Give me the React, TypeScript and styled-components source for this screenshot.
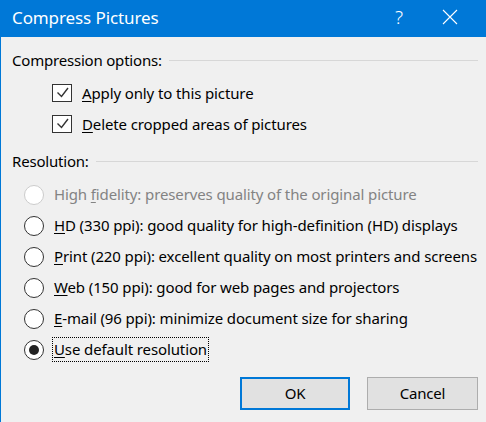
import styled, { createGlobalStyle } from 'styled-components';

const GlobalStyle = createGlobalStyle`
  html, body {
    margin: 0;
    padding: 0;
    background: #f0f0f0;
  }
  body {
    font-family: "Noto Sans", "Open Sans", sans-serif;
  }
`;

const Window = styled.div`
  width: 486px;
  height: 422px;
  box-sizing: border-box;
  border-left: 1px solid #0078d7;
  background: #f0f0f0;
  display: flex;
  flex-direction: column;
  overflow: hidden;
`;

const TitleBar = styled.div`
  height: 37px;
  flex: none;
  background: #0078d7;
  color: #fff;
  display: flex;
  align-items: center;
  padding: 0 0 3px 11px;
  box-sizing: border-box;
`;

const TitleText = styled.div`
  flex: 1;
  font-size: 17px;
  letter-spacing: -0.1px;
`;

const TitleButton = styled.div<{ $width: number }>`
  width: ${(p) => p.$width}px;
  display: flex;
  justify-content: center;
  align-items: center;
  font-size: 19px;
  font-weight: 300;
`;

const Body = styled.div`
  flex: 1;
  display: flex;
  flex-direction: column;
  padding: 11px 8px 0 11px;
`;

const GroupHeader = styled.div<{ $top?: number }>`
  height: 24px;
  margin-top: ${(p) => p.$top ?? 0}px;
  display: flex;
  align-items: center;
  font-size: 15px;
  letter-spacing: -0.2px;
  color: #000;
  &::after {
    content: '';
    flex: 1;
    height: 1px;
    background: #d7d7d7;
    margin-left: 7px;
    margin-top: 1px;
  }
`;

const OptionList = styled.div<{ $indent: number; $top: number }>`
  display: flex;
  flex-direction: column;
  padding-left: ${(p) => p.$indent}px;
  margin-top: ${(p) => p.$top}px;
`;

const OptionRow = styled.div<{ $disabled?: boolean }>`
  height: 31px;
  display: flex;
  align-items: center;
  gap: 10px;
  font-size: 15px;
  letter-spacing: -0.12px;
  white-space: nowrap;
  color: ${(p) => (p.$disabled ? '#838383' : '#000')};
`;

const CheckBox = styled.div`
  width: 20px;
  height: 18px;
  box-sizing: border-box;
  border: 1px solid #333;
  background: #fff;
  flex: none;
  display: flex;
`;

const Radio = styled.div<{ $disabled?: boolean; $checked?: boolean }>`
  width: 20px;
  height: 20px;
  box-sizing: border-box;
  border-radius: 50%;
  border: 1px solid ${(p) => (p.$disabled ? '#cccccc' : '#333')};
  background: #fff;
  flex: none;
  display: flex;
  align-items: center;
  justify-content: center;
  &::after {
    content: '';
    display: ${(p) => (p.$checked ? 'block' : 'none')};
    width: 10px;
    height: 10px;
    border-radius: 50%;
    background: #222;
  }
`;

const Label = styled.span<{ $focused?: boolean }>`
  padding: 2px 2px 3px;
  margin-left: -2px;
  outline: ${(p) => (p.$focused ? '1px dotted #000' : 'none')};
  outline-offset: -1px;
`;

const Key = styled.span`
  text-decoration: underline;
  text-underline-offset: 2px;
`;

const ButtonRow = styled.div`
  display: flex;
  justify-content: flex-end;
  gap: 17px;
  margin-top: 12px;
`;

const Button = styled.button<{ $primary?: boolean }>`
  width: ${(p) => (p.$primary ? 110 : 111)}px;
  height: 33px;
  box-sizing: border-box;
  background: #e1e1e1;
  border: ${(p) => (p.$primary ? '2px solid #0078d7' : '1px solid #adadad')};
  font-family: "Noto Sans", "Open Sans", sans-serif;
  font-size: 15px;
  letter-spacing: -0.2px;
  color: #000;
  padding: 0 0 2px;
`;

const Check = () => (
  <svg width="18" height="16" viewBox="0 0 18 16">
    <path d="M4.5 7.5 L8.5 11.5 L15 3" fill="none" stroke="#333" strokeWidth="1.4" />
  </svg>
);

const radios = [
  { key: 'f', before: 'High ', after: 'idelity: preserves quality of the original picture', disabled: true },
  { key: 'H', before: '', after: 'D (330 ppi): good quality for high-definition (HD) displays' },
  { key: 'P', before: '', after: 'rint (220 ppi): excellent quality on most printers and screens' },
  { key: 'W', before: '', after: 'eb (150 ppi): good for web pages and projectors' },
  { key: 'E', before: '', after: '-mail (96 ppi): minimize document size for sharing' },
  { key: 'U', before: '', after: 'se default resolution', checked: true },
];

export default function App() {
  return (
    <>
      <GlobalStyle />
      <Window>
        <TitleBar>
          <TitleText>Compress Pictures</TitleText>
          <TitleButton $width={30}>?</TitleButton>
          <TitleButton $width={72}>
            <svg width="16" height="16" viewBox="0 0 16 16">
              <path d="M1 1 L15 15 M15 1 L1 15" stroke="#fff" strokeWidth="1.1" />
            </svg>
          </TitleButton>
        </TitleBar>
        <Body>
          <GroupHeader>Compression options:</GroupHeader>
          <OptionList $indent={40} $top={5}>
            <OptionRow>
              <CheckBox><Check /></CheckBox>
              <span><Key>A</Key>pply only to this picture</span>
            </OptionRow>
            <OptionRow>
              <CheckBox><Check /></CheckBox>
              <span><Key>D</Key>elete cropped areas of pictures</span>
            </OptionRow>
          </OptionList>
          <GroupHeader $top={10}>Resolution:</GroupHeader>
          <OptionList $indent={12} $top={6}>
            {radios.map((r) => (
              <OptionRow key={r.key} $disabled={r.disabled}>
                <Radio $disabled={r.disabled} $checked={r.checked} />
                <Label $focused={r.checked}>
                  {r.before}
                  <Key>{r.key}</Key>
                  {r.after}
                </Label>
              </OptionRow>
            ))}
          </OptionList>
          <ButtonRow>
            <Button $primary>OK</Button>
            <Button>Cancel</Button>
          </ButtonRow>
        </Body>
      </Window>
    </>
  );
}
